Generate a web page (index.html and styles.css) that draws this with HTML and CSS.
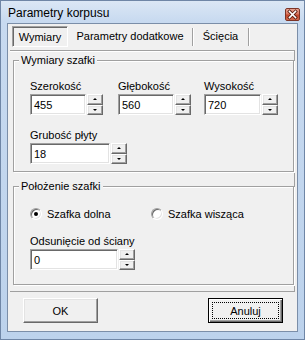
FILE: index.html
```html
<!DOCTYPE html>
<html lang="pl">
<head>
<meta charset="utf-8">
<title>Parametry korpusu</title>
<link rel="stylesheet" href="styles.css">
</head>
<body>
<div class="window">
  <div class="titlebar">
    <span class="title">Parametry korpusu</span>
    <span class="close">
      <svg width="15" height="13" viewBox="0 0 15 13">
        <path d="M4.5 3.5 L10.5 9.5 M10.5 3.5 L4.5 9.5" stroke="#5a1c10" stroke-width="3.2" stroke-linecap="square"/>
        <path d="M4.5 3.5 L10.5 9.5 M10.5 3.5 L4.5 9.5" stroke="#ffffff" stroke-width="1.6" stroke-linecap="square"/>
      </svg>
    </span>
  </div>
  <div class="client">
    <div class="tabs">
      <div class="tab active">Wymiary</div>
      <div class="tab t2">Parametry dodatkowe</div>
      <div class="tab t3">Ścięcia</div>
    </div>
    <div class="page">
      <div class="group g1">
        <div class="legend">Wymiary szafki</div>
        <div class="grid">
          <div class="field">
            <div class="label">Szerokość</div>
            <div class="spinbox"><div class="edit w55">455</div><div class="spin"><span class="up"></span><span class="down"></span></div></div>
          </div>
          <div class="field">
            <div class="label">Głębokość</div>
            <div class="spinbox"><div class="edit w55">560</div><div class="spin"><span class="up"></span><span class="down"></span></div></div>
          </div>
          <div class="field">
            <div class="label">Wysokość</div>
            <div class="spinbox"><div class="edit w56">720</div><div class="spin"><span class="up"></span><span class="down"></span></div></div>
          </div>
        </div>
        <div class="field row2">
          <div class="label">Grubość płyty</div>
          <div class="spinbox"><div class="edit w80">18</div><div class="spin"><span class="up"></span><span class="down"></span></div></div>
        </div>
      </div>
      <div class="group g2">
        <div class="legend">Położenie szafki</div>
        <div class="radios">
          <div class="radio r1"><span class="circle checked"></span><span>Szafka dolna</span></div>
          <div class="radio r2"><span class="circle"></span><span>Szafka wisząca</span></div>
        </div>
        <div class="field row3">
          <div class="label">Odsunięcie od ściany</div>
          <div class="spinbox"><div class="edit w88">0</div><div class="spin"><span class="up"></span><span class="down"></span></div></div>
        </div>
      </div>
    </div>
    <div class="buttons">
      <div class="btn">OK</div>
      <div class="btn default"><span class="focus">Anuluj</span></div>
    </div>
  </div>
</div>
</body>
</html>
```

FILE: styles.css
```css
* { box-sizing: border-box; }
html, body { margin: 0; padding: 0; }
body {
  width: 305px;
  height: 340px;
  overflow: hidden;
  font-family: "Liberation Sans", Arial, sans-serif;
  font-size: 11px;
  color: #000;
  background: #f0f0f0;
}
.window {
  width: 305px;
  height: 340px;
  padding: 0 6px 7px 6px;
  border: 1px solid #6f86a6;
  background: linear-gradient(#dbe7f5 0px, #c8daf0 20px, #bcd2ec 100%);
  display: flex;
  flex-direction: column;
}
.titlebar {
  height: 22px;
  display: flex;
  align-items: center;
  justify-content: space-between;
  flex: none;
}
.title {
  font-size: 12px;
  padding-left: 1px;
  padding-top: 2px;
}
.close {
  width: 15px;
  height: 13px;
  margin-right: -2px;
  margin-top: 4px;
  border: 1px solid #7d3426;
  border-radius: 2px;
  background: linear-gradient(#e8a493 0%, #d97660 45%, #c2452b 55%, #d26a4e 100%);
  display: flex;
}
.close svg { display: block; margin: -1px; }
.client {
  flex: 1;
  border: 1px solid #7b8ea8;
  background: #f0f0f0;
  display: flex;
  flex-direction: column;
}
.tabs {
  display: flex;
  height: 21px;
  margin: 2px 0 0 4px;
  flex: none;
}
.tab {
  height: 21px;
  line-height: 19px;
  text-align: center;
}
.tab.active {
  width: 56px;
  border: 1px solid;
  border-color: #a0a0a0 #ffffff #ffffff #a0a0a0;
  box-shadow: inset 1px 1px 0 #696969;
  padding-top: 1px;
}
.tab.t2, .tab.t3 {
  border-right: 1px solid #a0a0a0;
  box-shadow: 1px 0 0 #ffffff;
  height: 18px;
  margin-top: 2px;
  line-height: 16px;
}
.tab.t2 { width: 125px; }
.tab.t3 { width: 56px; }
.page {
  margin: 3px 0 0 2px;
  width: 285px;
  height: 242px;
  border-top: 1px solid #a0a0a0;
  border-right: 1px solid #a0a0a0;
  border-bottom: 1px solid #a0a0a0;
  box-shadow: inset 0 1px 0 #ffffff;
  padding: 0 0 0 3px;
  flex: none;
}
.group {
  width: 281px;
  border: 1px solid #a0a0a0;
  box-shadow: inset 1px 1px 0 #ffffff, 1px 1px 0 #ffffff;
}
.g1 {
  margin-top: 9px;
  height: 112px;
  padding: 0 0 0 16px;
}
.g2 {
  margin-top: 14px;
  height: 99px;
  padding: 0 0 0 16px;
}
.legend {
  width: max-content;
  margin: -7px 0 0 -11px;
  padding: 0 2px;
  line-height: 13px;
  background: #f0f0f0;
}
.grid {
  display: grid;
  grid-template-columns: 88px 86px auto;
  margin-top: 13px;
}
.label {
  line-height: 13px;
  height: 13px;
  white-space: nowrap;
}
.spinbox {
  display: flex;
  margin-top: 1px;
  height: 21px;
}
.edit {
  height: 21px;
  border: 1px solid;
  border-color: #a0a0a0 #ffffff #ffffff #a0a0a0;
  box-shadow: inset 1px 1px 0 #696969, inset -1px -1px 0 #e3e3e3;
  background: #fff;
  padding: 3px 0 0 3px;
  line-height: 14px;
}
.w55 { width: 56px; }
.w56 { width: 57px; }
.w80 { width: 80px; }
.w88 { width: 88px; }
.spin {
  width: 16px;
  height: 21px;
  margin-left: 1px;
  display: flex;
  flex-direction: column;
}
.spin span {
  flex: 1;
  position: relative;
  border: 1px solid;
  border-color: #ffffff #696969 #696969 #ffffff;
  box-shadow: inset -1px -1px 0 #a0a0a0, inset 1px 1px 0 #e3e3e3;
  background: #f0f0f0;
}
.spin span::after {
  content: "";
  position: absolute;
  left: 5px;
  width: 0;
  height: 0;
  border-left: 2px solid transparent;
  border-right: 2px solid transparent;
}
.spin .up::after { top: 3px; border-bottom: 2px solid #000; }
.spin .down::after { top: 3px; border-top: 2px solid #000; }
.row2 { margin-top: 14px; }
.radios {
  display: flex;
  margin-top: 14px;
  height: 13px;
  align-items: center;
}
.radio {
  display: flex;
  align-items: center;
  gap: 5px;
}
.r1 { width: 121px; }
.circle {
  width: 12px;
  height: 12px;
  border-radius: 50%;
  border: 1px solid;
  border-color: #a0a0a0 #ffffff #ffffff #a0a0a0;
  box-shadow: inset 1px 1px 0 #696969, inset -1px -1px 0 #e3e3e3;
  background: #fff;
  position: relative;
  flex: none;
}
.circle.checked::after {
  content: "";
  position: absolute;
  left: 3px;
  top: 3px;
  width: 4px;
  height: 4px;
  border-radius: 50%;
  background: #000;
}
.row3 { margin-top: 15px; }
.buttons {
  display: flex;
  justify-content: space-between;
  margin: 6px 0 0 15px;
  width: 260px;
}
.btn {
  width: 75px;
  height: 25px;
  border: 1px solid;
  border-color: #ffffff #696969 #696969 #ffffff;
  box-shadow: inset -1px -1px 0 #a0a0a0, inset 1px 1px 0 #e3e3e3;
  display: flex;
  align-items: center;
  justify-content: center;
  padding-top: 1px;
}
.btn.default {
  border: 1px solid #000;
  box-shadow: inset 1px 1px 0 #ffffff, inset -1px -1px 0 #696969, inset -2px -2px 0 #a0a0a0;
  padding: 3px;
}
.focus {
  width: 100%;
  height: 100%;
  border: 1px dotted #000;
  display: flex;
  align-items: center;
  justify-content: center;
}
```
